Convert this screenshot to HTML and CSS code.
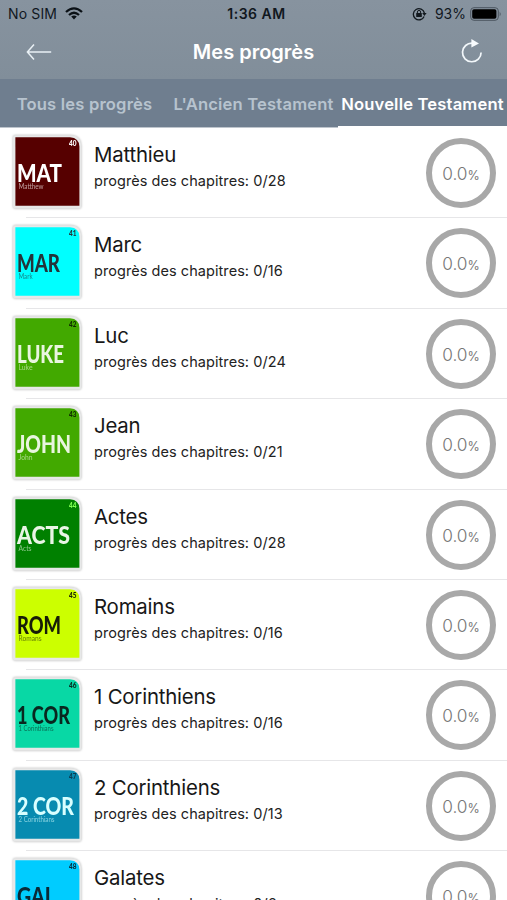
FILE: index.html
```
<!DOCTYPE html>
<html lang="fr">
<head>
<meta charset="utf-8">
<title>Mes progrès</title>
<link rel="stylesheet" href="styles.css">
</head>
<body>
<header class="top">
  <div class="status">
    <div class="carrier"><span class="sim">No SIM</span>
      <svg width="18" height="13" viewBox="0 0 18 13"><g fill="none" stroke="#0b1116" stroke-width="2.3"><path d="M1 5Q9-2.2 17 5"/><path d="M4 8Q9 3.6 14 8"/></g><path d="M6.2 9.6Q9 7.4 11.8 9.6L9 12.4Z" fill="#0b1116"/></svg>
    </div>
    <div class="clock">1:36 AM</div>
    <div class="power">
      <svg width="15" height="14" viewBox="0 0 15 14"><path d="M12.1 9.5A5.6 5.6 0 1 1 12.4 6" fill="none" stroke="#11181e" stroke-width="1.3"/><path d="M10.2 6h4.4l-2.2 3z" fill="#11181e"/><rect x="4.2" y="6" width="5.6" height="4" rx=".5" fill="#11181e"/><path d="M5.4 6V5a1.6 1.6 0 0 1 3.2 0v1" fill="none" stroke="#11181e" stroke-width="1"/></svg>
      <span class="level">93%</span>
      <svg class="battery" width="32" height="14" viewBox="0 0 32 14"><rect x=".7" y=".7" width="27.6" height="12.6" rx="3.2" fill="none" stroke="#4c5660" stroke-width="1"/><rect x="2.2" y="2.2" width="24.2" height="9.6" rx="1.8" fill="#000"/><path d="M29.7 4.7q2 2.3 0 4.6z" fill="#4c5660"/></svg>
    </div>
  </div>
  <div class="nav">
    <svg class="back" width="27" height="18" viewBox="0 0 27 18"><path d="M8 1.5L1.4 9 8 16.5M1.4 9H25.2" fill="none" stroke="#e9f0f5" stroke-width="1.5"/></svg>
    <h1 class="heading">Mes progrès</h1>
    <svg class="reload" width="22" height="24" viewBox="0 0 22 24"><path d="M11.5 4.2A9.3 9.3 0 1 0 20.1 13.4" fill="none" stroke="#f2f7fa" stroke-width="1.7"/><path d="M10.4 0L18 4.4 10.4 8.6z" fill="#f8fbfd"/></svg>
  </div>
</header>
<nav class="tabs">
  <span class="tab tab-all">Tous les progrès</span>
  <span class="tab tab-old">L'Ancien Testament</span>
  <span class="tab tab-new active">Nouvelle Testament</span>
</nav>
<main class="list" id="list"></main>
<script src="app.js"></script>
</body>
</html>
```
FILE: styles.css
```
* { box-sizing: border-box; }
body {
  margin: 0;
  width: 507px;
  height: 900px;
  overflow: hidden;
  background: #fff;
  color: #171717;
  font-family: Inter, "Liberation Sans", sans-serif;
}
svg { display: block; flex: none; }
.top { height: 79px; background: linear-gradient(#87939f, #818e9a); }
.status {
  display: grid;
  grid-template-columns: 1fr auto 1fr;
  align-items: center;
  height: 27px;
  padding: 0 5px 0 8px;
  color: #11181e;
  font-size: 14px;
}
.carrier, .power { display: flex; align-items: center; }
.carrier { gap: 8px; }
.sim { letter-spacing: .15px; }
.power { justify-content: flex-end; }
.level { margin: 0 4px 0 8px; }
.clock { font-weight: 600; letter-spacing: .5px; margin-right: -3px; }
.nav {
  display: grid;
  grid-template-columns: 1fr auto 1fr;
  align-items: center;
  height: 50px;
  padding: 0 24px 0 26px;
}
.heading { margin: 0; font-size: 20px; line-height: 24px; font-weight: 600; color: #fff; position: relative; left: -1px; }
.reload { justify-self: end; margin-bottom: 3px; }
.tabs {
  display: grid;
  grid-template-columns: 169px 169px 169px;
  height: 49px;
  background: #6f7e8f;
  border-bottom: 1px solid #bec5cd;
}
.tab {
  display: flex;
  align-items: center;
  justify-content: center;
  height: 49px;
  padding-top: 1px;
  color: #b7c3ce;
  font-size: 16.6px;
  letter-spacing: .17px;
  font-weight: 600;
  white-space: nowrap;
}
.active { color: #fff; border-bottom: 2px solid #fff; padding-top: 3px; }
.row {
  display: flex;
  align-items: flex-start;
  height: 90.38px;
  padding: 6px 11px 0 12px;
  background: linear-gradient(#e6e6e8, #e6e6e8) 26px 100% / 481px 1px no-repeat;
}
.cover { filter: drop-shadow(0 0 1px rgba(0, 0, 0, .3)); overflow: visible; }
.cover-code { font-family: Lato, sans-serif; font-weight: 900; font-size: 25px; }
.cover-name { font-family: Lato, sans-serif; font-weight: 400; font-size: 7.2px; opacity: .6; }
.cover-num { font-family: Lato, sans-serif; font-weight: 900; font-size: 7px; }
.info { flex: 1; padding: 8px 0 0 12px; }
.name { font-size: 20.4px; line-height: 26px; letter-spacing: -.2px; }
.count { margin-top: 2px; font-size: 14.5px; line-height: 22px; letter-spacing: .06px; color: #222; }
.ring {
  display: flex;
  align-items: baseline;
  justify-content: center;
  width: 70px;
  height: 70px;
  margin: 4px 0 0;
  border: 6px solid #a8a8a8;
  border-radius: 50%;
  color: #777;
  font-weight: 300;
  font-size: 17.3px;
  line-height: 60px;
}
.unit { font-size: 12.5px; font-weight: 400; }
```
FILE: app.js
```
const books = [
  ["Matthieu", 28, "MAT", "Matthew", 40, "#560000", "#ffffff", "#ffffff", 45, 25],
  ["Marc", 16, "MAR", "Mark", 41, "#00ffff", "#24343a", "#24343a", 43, 14],
  ["Luc", 24, "LUKE", "Luke", 42, "#42a900", "#e9f5df", "#102b00", 47, 14],
  ["Jean", 21, "JOHN", "John", 43, "#42a900", "#e9f5df", "#102b00", 54, 14],
  ["Actes", 28, "ACTS", "Acts", 44, "#008000", "#e9f5e5", "#7dff50", 53, 13],
  ["Romains", 16, "ROM", "Romans", 45, "#ccff00", "#171d08", "#171d08", 44, 23],
  ["1 Corinthiens", 16, "1 COR", "1 Corinthians", 46, "#08d8a5", "#09271f", "#09271f", 53, 35],
  ["2 Corinthiens", 13, "2 COR", "2 Corinthians", 47, "#078bb0", "#d8ffff", "#083b50", 57, 36],
  ["Galates", 6, "GAL", "Galatians", 48, "#00ccff", "#0a2a38", "#0a2a38", 38, 26]
];
document.getElementById("list").innerHTML = books.map(
  ([name, total, code, label, num, bg, ink, numInk, codeWidth, labelWidth]) => `
  <article class="row">
    <svg class="cover" width="70" height="76" viewBox="0 0 70 76">
      <path d="M3 1.2H59Q69 1.5 69.3 11.5V72.5Q69.3 74.5 67.3 74.5H3Q1 74.5 1 72.5V3.2Q1 1.2 3 1.2Z" fill="#e7e8e8"/>
      <path d="M3.4 3.2H58Q67.2 3.7 67.4 12.7V71.8H3.4Z" fill="${bg}"/>
      <text class="cover-code" x="5" y="47.5" textLength="${codeWidth}" lengthAdjust="spacingAndGlyphs" fill="${ink}">${code}</text>
      <text class="cover-name" x="6.5" y="54.7" textLength="${labelWidth}" lengthAdjust="spacingAndGlyphs" fill="${ink}">${label}</text>
      <text class="cover-num" x="57" y="12" textLength="7.5" lengthAdjust="spacingAndGlyphs" fill="${numInk}">${num}</text>
    </svg>
    <div class="info">
      <div class="name">${name}</div>
      <div class="count">progrès des chapitres: 0/${total}</div>
    </div>
    <div class="ring">0.0<span class="unit">%</span></div>
  </article>`).join("");
```
